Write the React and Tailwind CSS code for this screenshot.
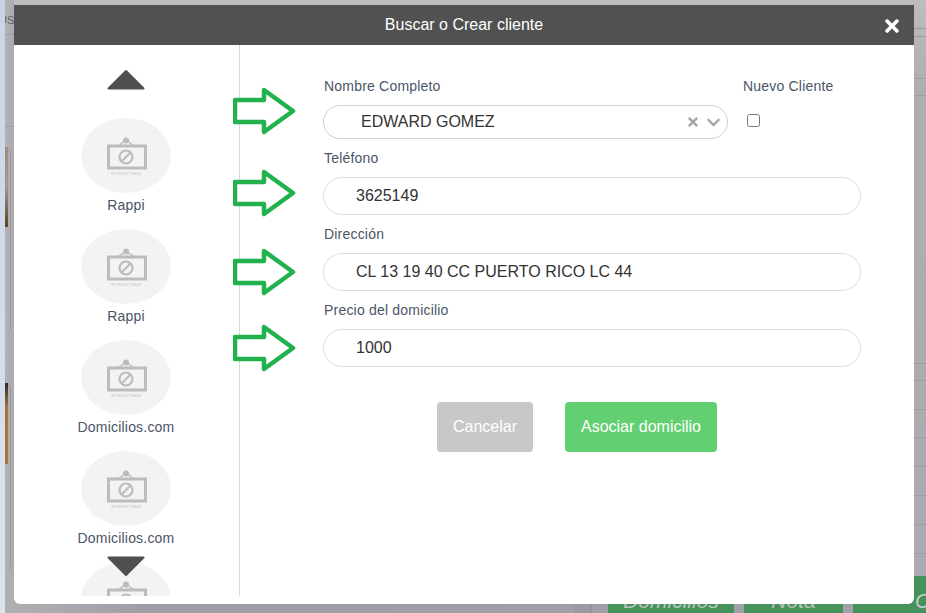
import React from "react";
import { FaTimes, FaChevronDown } from "react-icons/fa";

const providers = ["Rappi", "Rappi", "Domicilios.com", "Domicilios.com", ""];
const lineYs = [9, 8, 42, 17, 268, 17, 29, 28, 29, 29, 29, 29];

const NoImage = () => (
  <svg viewBox="0 0 90 75" className="h-[75px] w-[90px] shrink-0">
    <ellipse cx="45" cy="37.5" rx="45" ry="37.5" fill="#f3f3f3" />
    <g stroke="#eeeeee" strokeWidth="1">
      <path d="M13 11 23 19M76 11 67 19M13 64 23 56M76 64 67 56" />
    </g>
    <circle cx="45" cy="22.5" r="3" fill="#bcbcbc" />
    <path d="M37 28 45 22 53 28" fill="none" stroke="#bcbcbc" strokeWidth="1.5" />
    <rect x="27.5" y="28" width="37" height="22" fill="none" stroke="#bcbcbc" strokeWidth="3" />
    <circle cx="45" cy="39" r="6.5" fill="none" stroke="#bcbcbc" strokeWidth="2.2" />
    <path d="M40.5 43.5 49.5 34.5" stroke="#bcbcbc" strokeWidth="2.2" />
    <text x="45" y="56.5" textAnchor="middle" fontSize="2.9" fill="#cfcfcf" fontWeight="700">
      NO PRODUCT IMAGE
    </text>
  </svg>
);

const Triangle = ({ down }) => (
  <svg viewBox="0 0 38 21" className={`h-[21px] w-[38px] ${down ? "rotate-180" : ""}`}>
    <path d="M19 2 36.5 19.5H1.5Z" fill="#4f4f4f" stroke="#4f4f4f" strokeWidth="2" strokeLinejoin="round" />
  </svg>
);

const GreenArrow = ({ className }) => (
  <svg viewBox="0 0 63 48" className={`absolute left-[233px] h-[48px] w-[63px] ${className}`}>
    <path
      d="M2 13H31V3L60 24 31 45V35H2Z"
      fill="#fff"
      stroke="#22b14c"
      strokeWidth="4.5"
      strokeLinejoin="round"
    />
  </svg>
);

const Field = ({ label, value }) => (
  <div className="mt-[9px] w-[538px]">
    <div className="mb-[9px] pl-px text-[14px] leading-5 tracking-[0.2px] text-[#4a5568]">{label}</div>
    <input
      readOnly
      value={value}
      className="h-[38px] w-full rounded-[19px] border border-[#dcdcdc] bg-white pl-[32px] text-[16px] text-[#333] outline-none"
    />
  </div>
);

export default function App() {
  return (
    <div className="relative flex h-[613px] w-[926px] overflow-hidden bg-[#a8a8ae] font-['Liberation_Sans',Arial,sans-serif]">
      {/* pagina de atras */}
      <div className="h-full w-[5px] shrink-0 bg-linear-to-b from-[#c9d4e6] to-[#dbe3ef]" />
      <div className="flex min-w-0 flex-1 flex-col">
        <div className="flex h-[576px] bg-linear-to-b from-[#bdbdbd] via-[#aeaeb2] via-15% to-[#aaaab0]">
          <div className="w-[9px] shrink-0 overflow-hidden bg-linear-to-r from-[#b3b3b6] to-[#ababaf]">
            <div className="-ml-[6px] h-[35px] whitespace-nowrap border-b border-[#a0a0a4] pt-[12px] text-[11px] leading-4 text-[#5f5f62]">
              US
            </div>
            <div className="h-[92px] border-b border-[#a0a0a4]" />
            <div className="mt-[20px] h-[188px] w-[6px] rounded-r-lg border-r border-[#9a9aa0]">
              <div className="mt-[3px] h-[80px] w-[3px] bg-linear-to-b from-[#a38a72] via-[#a09a90] to-[#5a4020]" />
            </div>
            <div className="mt-[48px] h-[188px] w-[6px] rounded-r-lg border-r border-[#9a9aa0]">
              <div className="mt-[4px] h-[81px] w-[3px] bg-linear-to-b from-[#2b2b2b] via-[#a8743a] via-30% to-[#a8743a]" />
            </div>
          </div>
          <div className="flex-1" />
          <div className="flex w-[12px] shrink-0 flex-col pt-[20px]">
            {lineYs.map((h, i) => (
              <div key={i} style={{ height: h }} className="border-b border-[#9d9da2]" />
            ))}
          </div>
        </div>
        <div className="flex h-[37px] justify-end bg-linear-to-r from-[#b0b0b4] via-[#9e9ea6] via-15% to-[#a0a0a8]">
          <div className="mr-[16px] h-full w-[18px] border-r border-[#8f8f96] bg-[#9a9aa2]" />
          <div className="flex h-full w-[126px] items-end justify-center bg-[#47925a] text-[21px] italic leading-[24px] text-[#b9c2bc]">
            Domicilios
          </div>
          <div className="ml-[10px] flex h-full w-[99px] items-end justify-center bg-[#47925a] text-[21px] italic leading-[24px] text-[#b9c2bc]">
            Nota
          </div>
          <div className="ml-[10px] flex h-full w-[73px] items-end bg-[#47925a] pl-[62px] text-[21px] italic leading-[24px] text-[#c4cdc7]">
            C
          </div>
        </div>
      </div>

      {/* modal */}
      <div className="absolute left-[14px] top-[5px] flex h-[599px] w-[900px] flex-col rounded-b-[6px] bg-white pb-[8px]">
        <div className="flex h-[40px] shrink-0 items-center justify-center bg-[#515151] text-[16px] text-white">
          Buscar o Crear cliente
          <FaTimes className="absolute right-[12px] top-[11px] text-[20px] text-white" />
        </div>
        <div className="flex min-h-0 flex-1">
          <div className="flex w-[226px] shrink-0 flex-col items-center overflow-hidden border-r border-[#d9d9d9] pt-[73px] pr-[1px]">
            {providers.map((name, i) => (
              <div key={i} className="flex h-[111px] shrink-0 flex-col items-center">
                <NoImage />
                <div className="mt-[2px] text-[14px] leading-5 tracking-[0.2px] text-[#4a5568]">{name}</div>
              </div>
            ))}
          </div>
          <div className="pl-[83px] pt-[22px]">
            <div className="flex">
              <div className="w-[405px]">
                <div className="mb-[9px] mt-[9px] pl-px text-[14px] leading-5 tracking-[0.2px] text-[#4a5568]">
                  Nombre Completo
                </div>
                <div className="flex h-[34px] items-center rounded-[17px] border border-[#cfcfcf] pl-[37px] pr-[6px]">
                  <span className="flex-1 text-[16px] text-[#333]">EDWARD GOMEZ</span>
                  <FaTimes className="text-[14px] text-[#a6a6a6]" />
                  <FaChevronDown className="ml-[6px] text-[15px] text-[#a6a6a6]" />
                </div>
              </div>
              <div className="ml-[15px] mt-[9px]">
                <div className="text-[14px] leading-5 tracking-[0.2px] text-[#4a5568]">Nuevo Cliente</div>
                <input type="checkbox" readOnly className="ml-[4px] mt-[18px] block h-[13px] w-[13px]" />
              </div>
            </div>
            <Field label="Teléfono" value="3625149" />
            <Field label="Dirección" value="CL 13 19 40 CC PUERTO RICO LC 44" />
            <Field label="Precio del domicilio" value="1000" />
            <div className="ml-[114px] mt-[35px] flex gap-[32px]">
              <button className="h-[50px] w-[96px] rounded-[4px] bg-[#c8c8c8] text-[16px] text-white">Cancelar</button>
              <button className="h-[50px] w-[152px] rounded-[4px] bg-[#62d070] text-[16px] text-white">
                Asociar domicilio
              </button>
            </div>
          </div>
        </div>
        <div className="absolute left-[93px] top-[64px]">
          <Triangle />
        </div>
        <div className="absolute left-[93px] top-[551px] flex">
          <Triangle down />
        </div>
      </div>

      {/* flechas verdes de la captura */}
      <GreenArrow className="top-[87px]" />
      <GreenArrow className="top-[169px]" />
      <GreenArrow className="top-[248px]" />
      <GreenArrow className="top-[324px]" />
    </div>
  );
}
